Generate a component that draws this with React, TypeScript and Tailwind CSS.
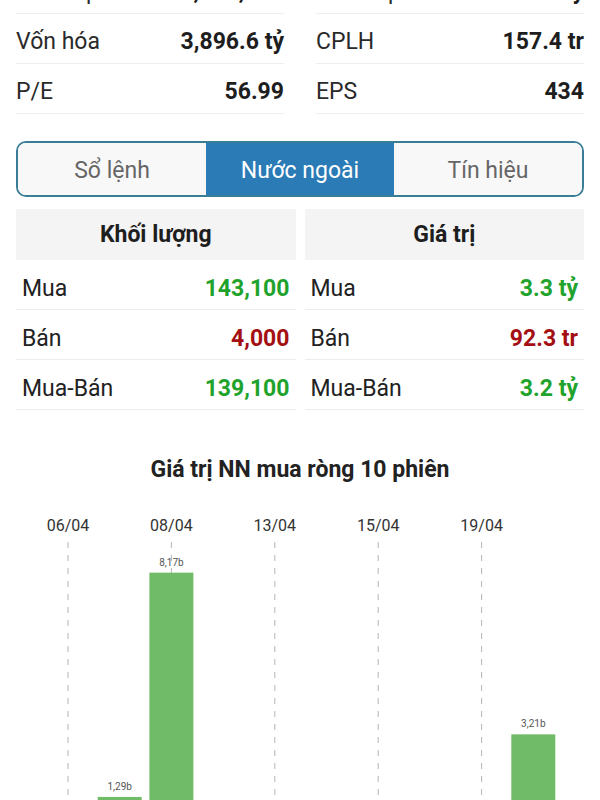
const font = { fontFamily: "Roboto, 'Noto Sans', sans-serif" };

const stats = [
  [
    { label: "KL khớp", value: "1,236,500" },
    { label: "GT khớp", value: "56.2 tỷ" },
  ],
  [
    { label: "Vốn hóa", value: "3,896.6 tỷ" },
    { label: "CPLH", value: "157.4 tr" },
  ],
  [
    { label: "P/E", value: "56.99" },
    { label: "EPS", value: "434" },
  ],
];

const volume = [
  { label: "Mua", value: "143,100", up: true },
  { label: "Bán", value: "4,000", up: false },
  { label: "Mua-Bán", value: "139,100", up: true },
];

const amount = [
  { label: "Mua", value: "3.3 tỷ", up: true },
  { label: "Bán", value: "92.3 tr", up: false },
  { label: "Mua-Bán", value: "3.2 tỷ", up: true },
];

// net foreign buy value per session, in billions
const sessions = [
  { date: "06/04", value: 0 },
  { date: "07/04", value: 1.29 },
  { date: "08/04", value: 8.17 },
  { date: "09/04", value: 0 },
  { date: "13/04", value: 0 },
  { date: "14/04", value: 0 },
  { date: "15/04", value: 0 },
  { date: "16/04", value: 0 },
  { date: "19/04", value: 0 },
  { date: "20/04", value: 3.21 },
];

function FlowTable({ title, rows }: { title: string; rows: typeof volume }) {
  return (
    <div className="flex flex-col">
      <div className="flex h-[51px] items-center justify-center bg-[#f4f4f4] pt-[2px] text-[23px] font-bold text-[#1e1e1e]">
        {title}
      </div>
      {rows.map((row) => (
        <div
          key={row.label}
          className="flex h-[50px] items-center justify-between border-b border-[#ececec] px-[6px] pt-[9px] text-[23px]"
        >
          <span className="text-[#222]">{row.label}</span>
          <span className={row.up ? "font-bold text-[#1fa32c]" : "font-bold text-[#a30f12]"}>
            {row.value}
          </span>
        </div>
      ))}
    </div>
  );
}

function NetChart() {
  const step = 51.7;
  const first = 68;
  const base = 339;
  const scale = 32.6;

  return (
    <svg width="600" height="340" className="block">
      {sessions.map((s, i) =>
        i % 2 === 0 ? (
          <g key={s.date}>
            <text
              x={first + i * step}
              y={31}
              textAnchor="middle"
              fontSize="16"
              fill="#333"
              style={font}
            >
              {s.date}
            </text>
            <line
              x1={first + i * step}
              x2={first + i * step}
              y1={42}
              y2={340}
              stroke="#b5b5b5"
              strokeDasharray="6 7"
            />
          </g>
        ) : null,
      )}
      {sessions.map((s, i) => {
        if (s.value <= 0) return null;
        const cx = first + i * step;
        const h = s.value * scale;
        return (
          <g key={"bar" + s.date}>
            <rect x={cx - 22} y={base - h} width={44} height={h} fill="#70bb68" />
            <text
              x={cx}
              y={base - h - 7}
              textAnchor="middle"
              fontSize="10"
              fill="#555"
              style={font}
            >
              {s.value.toFixed(2).replace(".", ",").replace(/0$/, "")}b
            </text>
          </g>
        );
      })}
    </svg>
  );
}

export default function App() {
  const tabs = ["Sổ lệnh", "Nước ngoài", "Tín hiệu"];

  return (
    <div className="min-h-screen bg-white text-[#222]" style={font}>
      <div className="-mt-[36px] grid grid-cols-2 gap-x-8 px-4">
        {stats.map((pair) =>
          pair.map((cell) => (
            <div
              key={cell.label}
              className="flex h-[50px] items-center justify-between border-b border-[#efefef] pt-[7px] text-[23px]"
            >
              <span className="text-[#2a2a2a]">{cell.label}</span>
              <span className="font-bold text-[#1e1e1e]">{cell.value}</span>
            </div>
          )),
        )}
      </div>

      <div className="mx-4 mt-[27px] grid h-[56px] grid-cols-3 overflow-hidden rounded-[10px] border-2 border-[#3a7d96]">
        {tabs.map((tab, i) => (
          <div
            key={tab}
            className={
              i === 1
                ? "flex items-center justify-center bg-[#2a7bb6] pt-[5px] text-[23px] text-white"
                : "flex items-center justify-center bg-[#f8f8f8] pt-[5px] text-[23px] text-[#666]"
            }
          >
            {tab}
          </div>
        ))}
      </div>

      <div className="mt-3 grid grid-cols-2 gap-[9px] px-4">
        <FlowTable title="Khối lượng" rows={volume} />
        <FlowTable title="Giá trị" rows={amount} />
      </div>

      <div className="mt-[46px] text-center text-[23px] font-bold leading-7 text-[#222]">
        Giá trị NN mua ròng 10 phiên
      </div>

      <div className="mt-[16px]">
        <NetChart />
      </div>
    </div>
  );
}
